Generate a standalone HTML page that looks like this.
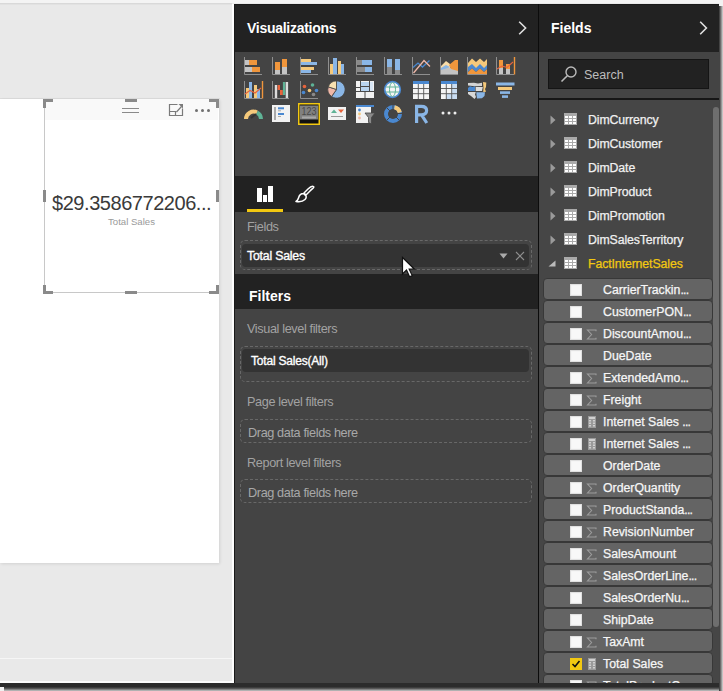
<!DOCTYPE html>
<html><head><meta charset="utf-8">
<style>
*{margin:0;padding:0;box-sizing:border-box}
html,body{width:723px;height:691px;overflow:hidden;background:#e9e9e9;font-family:"Liberation Sans",sans-serif}
.a{position:absolute}
.t{position:absolute;white-space:nowrap;line-height:1}
</style></head><body>
<!-- top strip -->
<div class="a" style="left:0;top:0;width:723px;height:3px;background:#f4f4f4"></div>
<div class="a" style="left:0;top:3px;width:232px;height:1px;background:#d9d9d9"></div>
<div class="a" style="left:0;top:4px;width:232px;height:1px;background:#e2e2e2"></div>
<!-- white report canvas -->
<div class="a" style="left:0;top:98px;width:220px;height:1px;background:#dcdcdc"></div>
<div class="a" style="left:0;top:99px;width:219px;height:464px;background:#fff;box-shadow:1px 1px 3px rgba(0,0,0,0.1)"></div>
<!-- card visual -->
<div class="a" style="left:44px;top:99px;width:175px;height:194px;border-left:1px solid #c8c8c8;border-bottom:1px solid #c8c8c8"></div>
<div class="a" style="left:45px;top:99px;width:173px;height:21px;background:#f9f9f9"></div>
<!-- handles -->
<div class="a" style="left:43px;top:99px;width:10px;height:3px;background:#8a8a8a"></div>
<div class="a" style="left:43px;top:99px;width:3px;height:9px;background:#8a8a8a"></div>
<div class="a" style="left:209px;top:99px;width:10px;height:3px;background:#8a8a8a"></div>
<div class="a" style="left:216px;top:99px;width:3px;height:9px;background:#8a8a8a"></div>
<div class="a" style="left:125px;top:99px;width:12px;height:3px;background:#8a8a8a"></div>
<div class="a" style="left:43px;top:190px;width:3px;height:12px;background:#8a8a8a"></div>
<div class="a" style="left:216px;top:190px;width:3px;height:12px;background:#8a8a8a"></div>
<div class="a" style="left:43px;top:285px;width:3px;height:9px;background:#8a8a8a"></div>
<div class="a" style="left:43px;top:291px;width:10px;height:3px;background:#8a8a8a"></div>
<div class="a" style="left:216px;top:285px;width:3px;height:9px;background:#8a8a8a"></div>
<div class="a" style="left:209px;top:291px;width:10px;height:3px;background:#8a8a8a"></div>
<div class="a" style="left:125px;top:291px;width:12px;height:3px;background:#8a8a8a"></div>
<!-- header icons -->
<div class="a" style="left:122px;top:108px;width:17px;height:1px;background:#8a8a8a"></div>
<div class="a" style="left:122px;top:112px;width:17px;height:1px;background:#8a8a8a"></div>
<svg class="a" style="left:168px;top:103px" width="16" height="14" viewBox="0 0 16 14"><path d="M9.5 1.5 H1.5 V12.5 H14.5 V5.5 M1.5 8.5 H7.5 V12.5 M8.5 9 L13.5 3.5" fill="none" stroke="#7a7a7a" stroke-width="1.2"/><path d="M10.5 1 H15 V5.5Z" fill="#7a7a7a"/></svg>
<div class="a" style="left:195px;top:109px;width:3px;height:3px;background:#707070;border-radius:50%"></div>
<div class="a" style="left:201px;top:109px;width:3px;height:3px;background:#707070;border-radius:50%"></div>
<div class="a" style="left:207px;top:109px;width:3px;height:3px;background:#707070;border-radius:50%"></div>
<div class="t" style="left:52px;top:193px;font-size:20px;color:#3a3a3a;letter-spacing:-0.45px">$29.3586772206...</div>
<div class="t" style="left:108px;top:217px;font-size:9.6px;color:#9a9a9a">Total Sales</div>

<!-- light lines near bottom -->
<div class="a" style="left:0;top:658px;width:232px;height:1px;background:#f6f6f6"></div>
<div class="a" style="left:0;top:681px;width:234px;height:2px;background:#fdfdfd"></div>
<div class="a" style="left:232px;top:4px;width:2px;height:679px;background:#fdfdfd"></div>

<!-- dark app frame -->
<div class="a" style="left:234px;top:4px;width:485px;height:683px;background:#1a1a1a"></div>
<div class="a" style="left:0;top:683px;width:719px;height:4px;background:#2c2c2c"></div>
<div class="a" style="left:0;top:687px;width:723px;height:4px;background:#f2f2f2"></div>
<div class="a" style="left:719px;top:0;width:4px;height:691px;background:#f2f2f2"></div>
<div class="a" style="left:4px;top:687px;width:719px;height:4px;background:linear-gradient(#303030,#5a5a5a 40%,#c8c8c8)"></div>
<div class="a" style="left:719px;top:6px;width:4px;height:685px;background:linear-gradient(90deg,#303030,#707070 40%,#d8d8d8)"></div>

<!-- VIZ PANE -->
<div class="a" style="left:235px;top:5px;width:303px;height:47px;background:#222"></div>
<div class="t" style="left:247px;top:21px;font-size:14px;font-weight:bold;color:#fff;letter-spacing:-0.28px">Visualizations</div>
<svg class="a" style="left:518px;top:21px" width="10" height="14" viewBox="0 0 10 14"><path d="M1.2 0.8 L7.6 7 L1.2 13.2" fill="none" stroke="#e0e0e0" stroke-width="1.6"/></svg>
<div class="a" style="left:235px;top:52px;width:303px;height:124px;background:#444"></div>
<svg class="a" style="left:0;top:0" width="723" height="176" viewBox="0 0 723 176"><path d="M244.5 57 V74.5 H262" fill="none" stroke="#8f8f8f" stroke-width="1"/><rect x="245" y="60" width="4" height="5" fill="#c4c4c4"/><rect x="249" y="60" width="8" height="5" fill="#f0963c"/><rect x="245" y="67" width="7" height="5" fill="#c4c4c4"/><rect x="252" y="67" width="8" height="5" fill="#f0963c"/><path d="M272.5 57 V74.5 H290" fill="none" stroke="#8f8f8f" stroke-width="1"/><rect x="275" y="62" width="5" height="8" fill="#f0963c"/><rect x="275" y="70" width="5" height="4" fill="#c4c4c4"/><rect x="282" y="59" width="5" height="8" fill="#f0963c"/><rect x="282" y="67" width="5" height="7" fill="#c4c4c4"/><path d="M300.5 57 V74.5 H318" fill="none" stroke="#8f8f8f" stroke-width="1"/><rect x="301" y="59" width="10" height="3" fill="#f5c97b"/><rect x="301" y="62" width="16" height="3" fill="#8ab6e6"/><rect x="301" y="67" width="13" height="3" fill="#f5c97b"/><rect x="301" y="70" width="10" height="3" fill="#8ab6e6"/><path d="M328.5 57 V74.5 H346" fill="none" stroke="#8f8f8f" stroke-width="1"/><rect x="330" y="64" width="3" height="10" fill="#f5c97b"/><rect x="333" y="58" width="4" height="16" fill="#8ab6e6"/><rect x="338" y="61" width="3" height="13" fill="#f5c97b"/><rect x="341" y="64" width="3" height="10" fill="#8ab6e6"/><path d="M356.5 57 V74.5 H374" fill="none" stroke="#8f8f8f" stroke-width="1"/><rect x="357" y="60" width="5" height="5" fill="#8a8a8a"/><rect x="362" y="60" width="10" height="5" fill="#8ab6e6"/><rect x="357" y="67" width="8" height="5" fill="#8a8a8a"/><rect x="365" y="67" width="7" height="5" fill="#8ab6e6"/><path d="M384.5 57 V74.5 H402" fill="none" stroke="#8f8f8f" stroke-width="1"/><rect x="387" y="59" width="5" height="8" fill="#8ab6e6"/><rect x="387" y="67" width="5" height="7" fill="#8a8a8a"/><rect x="395" y="59" width="5" height="11" fill="#8ab6e6"/><rect x="395" y="70" width="5" height="4" fill="#8a8a8a"/><path d="M412.5 57 V74.5 H430" fill="none" stroke="#8f8f8f" stroke-width="1"/><path d="M413 67.5 L418 63 L422.5 67 L429.5 60.5" fill="none" stroke="#4a88d0" stroke-width="1.3"/><path d="M413.5 73 L424 60.5 L430 66.5" fill="none" stroke="#f0b8a8" stroke-width="1.3"/><path d="M440.5 57 V74.5 H458" fill="none" stroke="#8f8f8f" stroke-width="1"/><path d="M441 74 V67 L446 64 L451 68 L458 66 V74Z" fill="#c4c4c4"/><path d="M441 66 L446 61 L450 64 L450 68 L446 66 L441 69Z" fill="#f8dca8"/><path d="M441 68 L446 65 L450 67 L446 68.5 L441 70Z" fill="#8ab6e6"/><path d="M449 65 L455 60 L458 60 V71 L451 69Z" fill="#f0963c"/><path d="M467.5 57 V74.5 H487" fill="none" stroke="#8f8f8f" stroke-width="1"/><path d="M468 63 L472 58.5 L476 62 L480 58.5 L484 62 L487 59 V67 L484 70 L480 66 L476 70 L472 66 L468 69Z" fill="#f5c97b"/><path d="M468 67 L472 64 L476 68 L480 64 L484 68 L487 65 V69 L484 72 L480 68.5 L476 72 L472 68.5 L468 72Z" fill="#4a88d0"/><path d="M468 72 L472 68.5 L476 72 L480 68.5 L484 72 L487 69 V74 H468Z" fill="#f0963c"/><path d="M496.5 57 V74.5 H514" fill="none" stroke="#8f8f8f" stroke-width="1"/><path d="M514.5 57 V74.5" stroke="#f0963c" stroke-width="1.4"/><rect x="499" y="60" width="4" height="8" fill="#f0963c"/><rect x="499" y="68" width="4" height="6" fill="#c4c4c4"/><rect x="506" y="64" width="4" height="5" fill="#f0963c"/><rect x="506" y="69" width="4" height="5" fill="#c4c4c4"/><path d="M497 69 L502 66 L507 67.5 L513 62" fill="none" stroke="#e8643c" stroke-width="1.1"/><path d="M244.5 81 V98.5 H262" fill="none" stroke="#8f8f8f" stroke-width="1"/><path d="M262.5 81 V98.5" stroke="#f0963c" stroke-width="1.4"/><rect x="246" y="88" width="3" height="10" fill="#f5c97b"/><rect x="249" y="82" width="3" height="16" fill="#8ab6e6"/><rect x="254" y="85" width="3" height="13" fill="#f5c97b"/><rect x="257" y="89" width="3" height="9" fill="#8ab6e6"/><path d="M245 94 L250 90.5 L255 93 L261 88" fill="none" stroke="#e8643c" stroke-width="1.1"/><path d="M272.5 81 V98.5 H289" fill="none" stroke="#8f8f8f" stroke-width="1"/><rect x="274.8" y="85" width="2.4" height="13" fill="#dcdcdc"/><rect x="277.6" y="85" width="2.4" height="5" fill="#e8643c"/><rect x="280" y="90" width="2.8" height="5" fill="#e8643c"/><rect x="282.9" y="82" width="2.4" height="13" fill="#5fb396"/><rect x="285.7" y="82" width="2.4" height="16" fill="#dcdcdc"/><path d="M300.5 81 V98.5 H318" fill="none" stroke="#8f8f8f" stroke-width="1"/><circle cx="304.5" cy="86.5" r="1.8" fill="#e8643c"/><circle cx="312.5" cy="85" r="1.8" fill="#5fb396"/><circle cx="303.5" cy="92.5" r="1.8" fill="#4a88d0"/><circle cx="309.5" cy="90.5" r="1.8" fill="#f5c97b"/><circle cx="316.5" cy="90.5" r="1.8" fill="#4a88d0"/><circle cx="313.5" cy="94.5" r="1.8" fill="#8a8a8a"/><path d="M336.5 89.5 L336.50 80.90 A8.6 8.6 0 1 1 331.57 96.54Z" fill="#8ab6e6" stroke="#444" stroke-width="0.8"/><path d="M336.5 89.5 L331.57 96.54 A8.6 8.6 0 0 1 328.32 86.84Z" fill="#f0b8a8" stroke="#444" stroke-width="0.8"/><path d="M336.5 89.5 L328.32 86.84 A8.6 8.6 0 0 1 336.50 80.90Z" fill="#f8e0b0" stroke="#444" stroke-width="0.8"/><rect x="356" y="81" width="18" height="17" fill="#f2f2f2"/><path d="M356 91.5 H374 M365 91.5 V98 M360.5 81 V91 M356 87.5 H360.5 M369.5 81 V91 M360.5 86.5 H369.5" stroke="#4a4a4a" stroke-width="1"/><rect x="361" y="82" width="8" height="4" fill="#b8d4f0"/><rect x="361" y="87" width="8" height="4" fill="#b8d4f0"/><rect x="370" y="82" width="3" height="9" fill="#d8e6f5"/><circle cx="392.5" cy="89.5" r="7.8" fill="#f4f4f4" stroke="#4a88d0" stroke-width="1.7"/><path d="M386 87 H399 M386 92 H399" stroke="#5fb396" stroke-width="1" fill="none"/><ellipse cx="392.5" cy="89.5" rx="3" ry="7" fill="none" stroke="#5fb396" stroke-width="1"/><rect x="413" y="81" width="16" height="18" fill="#f4f4f4"/><rect x="413" y="81" width="16" height="3" fill="#4a88d0"/><path d="M418.3 84 V99 M423.7 84 V99 M413 88.5 H429 M413 93.7 H429" stroke="#555" stroke-width="0.9"/><rect x="441" y="81" width="16" height="18" fill="#f4f4f4"/><rect x="441" y="81" width="16" height="3" fill="#4a88d0"/><rect x="446.3" y="93.7" width="10.7" height="5.3" fill="#c8dcf2"/><rect x="451.7" y="84" width="5.3" height="15" fill="#c8dcf2"/><path d="M446.3 84 V99 M451.7 84 V99 M441 88.5 H457 M441 93.7 H457" stroke="#555" stroke-width="0.9"/><path d="M468 83 L474 82.8 L478 83.5 L482 82.8 V86 L475 86.2 L468 85.5Z" fill="#d4d4d4"/><path d="M483 82 L486.3 82.5 L486 87 L485 89 L486 91.8 L483.2 92 L483.5 88Z" fill="#f5c97b"/><path d="M468 88 L470 86.3 L472.5 87 L475 86.3 V91 H468Z" fill="#4a88d0"/><path d="M475.6 87 H482.8 L482 91 H475.6Z" fill="#dedede"/><path d="M468 92 H475.8 L475 94.5 L476 97 L474.5 99 L471 96 L468 94Z" fill="#d8d8d8"/><path d="M476.3 92.2 H485 L484.5 96 L482 98.2 L477 98.5 L476.5 95Z" fill="#8ab6e6"/><rect x="496" y="82.5" width="18.5" height="3" fill="#8ab6e6"/><rect x="498" y="87" width="14" height="3" fill="#f5c97b"/><rect x="500" y="91.3" width="10" height="2.6" fill="#8ab6e6"/><rect x="502" y="95.3" width="6" height="2.6" fill="#8ab6e6"/><path d="M246 119 A7.5 7.5 0 0 1 257 112.5" fill="none" stroke="#f5c97b" stroke-width="4"/><path d="M257 112.5 A7.5 7.5 0 0 1 261 119" fill="none" stroke="#5fb396" stroke-width="4"/><path d="M251 118 L256 114" stroke="#333" stroke-width="2"/><rect x="272" y="105" width="18" height="17" fill="#f2f2f2"/><rect x="274" y="107" width="2" height="13" fill="#aaa"/><rect x="278" y="107.3" width="6" height="2" fill="#4a88d0"/><rect x="278" y="110.3" width="3" height="1" fill="#aaa"/><rect x="278" y="113" width="6" height="2" fill="#4a88d0"/><rect x="278" y="116" width="3" height="1" fill="#aaa"/><rect x="298.75" y="103.75" width="20.5" height="20.5" fill="#111" stroke="#f2c811" stroke-width="1.5"/><rect x="300" y="105.5" width="18" height="14" fill="#808080"/><rect x="302" y="116.5" width="14" height="2" fill="#a8a8a8"/><text x="309" y="115" font-family="Liberation Sans" font-size="10.5" fill="#4a4a4a" text-anchor="middle" textLength="15" lengthAdjust="spacingAndGlyphs">123</text><rect x="328" y="107" width="18" height="13" fill="#f2f2f2"/><path d="M331 113 L334 109.5 L337 113Z" fill="#5fb396"/><path d="M338 109.5 L344 109.5 L341 113Z" fill="#e8643c"/><rect x="331" y="116" width="12" height="1" fill="#999"/><rect x="356" y="105" width="15" height="18" fill="#f2f2f2"/><rect x="356" y="105" width="18" height="2" fill="#4a88d0"/><circle cx="359.5" cy="110" r="1.4" fill="#4a88d0"/><circle cx="359.5" cy="114" r="1.4" fill="#f5c97b"/><circle cx="359.5" cy="118" r="1.4" fill="#f0b8a8"/><path d="M365 113 H375 L371.5 117.5 V124 L368.5 122.5 V117.5Z" fill="#8a8a8a" stroke="#444" stroke-width="0.8"/><circle cx="393" cy="114" r="7" fill="none" stroke="#4a88d0" stroke-width="4"/><path d="M394.5 107.2 A7 7 0 0 1 399.8 112.5" fill="none" stroke="#f5c97b" stroke-width="4"/><path d="M393 104 V110 M403 113.5 H397 M387 120 L390 117 M387 108 L390 111 M399 120 L396 117" stroke="#444" stroke-width="1"/><path d="M416.6 123 V106.3 H421.3 C425.3 106.3 426.6 108.3 426.6 110.6 C426.6 113 425 114.8 421.3 114.8 H416.6 M421.5 114.8 L426.8 123" fill="none" stroke="#8ab6e6" stroke-width="3.2"/><circle cx="443" cy="113" r="1.5" fill="#eee"/><circle cx="449" cy="113" r="1.5" fill="#eee"/><circle cx="455" cy="113" r="1.5" fill="#eee"/></svg>
<div class="a" style="left:235px;top:176px;width:303px;height:36px;background:#222"></div>
<svg class="a" style="left:257px;top:185px" width="16" height="18" viewBox="0 0 16 18"><path d="M0 3h5v14h-5z M6 10h4v7h-4z M11 1h5v16h-5z" fill="#fff"/></svg>
<svg class="a" style="left:295px;top:185px" width="20" height="18" viewBox="0 0 20 18"><path d="M18.5 1.5 C17 0.5 15.5 1.5 13 4 L9 8 L11 10 L15 6 C17.5 3.5 19.5 2.5 18.5 1.5Z M8.5 8.5 C5 8.5 4 11 3.5 13 C3 15 2 16 1 16.5 C4 17 8 16.5 10 14.5 C11.5 13 11.5 11 10.5 10.5Z" fill="none" stroke="#fff" stroke-width="1.5" stroke-linejoin="round"/></svg>
<div class="a" style="left:247px;top:209px;width:36px;height:3px;background:#f2c811"></div>
<div class="a" style="left:235px;top:212px;width:303px;height:62px;background:#444"></div>
<div class="t" style="left:247px;top:221px;font-size:12.7px;letter-spacing:-0.38px;color:#a2a2a2">Fields</div>
<div class="a" style="left:240px;top:240px;width:292px;height:30px;border:1px dashed #686868;border-radius:5px"></div>
<div class="a" style="left:242px;top:244px;width:287px;height:23px;background:#333;border-radius:4px"></div>
<div class="t" style="left:247px;top:250px;font-size:12.3px;color:#fff;-webkit-text-stroke:0.35px #fff;letter-spacing:-0.2px">Total Sales</div>
<svg class="a" style="left:499px;top:253px" width="9" height="6" viewBox="0 0 9 6"><path d="M0.5 0.5h8l-4 5z" fill="#aaa"/></svg>
<svg class="a" style="left:515px;top:251px" width="10" height="10" viewBox="0 0 10 10"><path d="M1 1L9 9M9 1L1 9" stroke="#8e8e8e" stroke-width="1.1"/></svg>
<div class="a" style="left:235px;top:274px;width:303px;height:35px;background:#222"></div>
<div class="t" style="left:249px;top:289px;font-size:14px;font-weight:bold;color:#fff">Filters</div>
<div class="a" style="left:235px;top:309px;width:303px;height:374px;background:#444"></div>
<div class="t" style="left:247px;top:323px;font-size:12.7px;letter-spacing:-0.38px;color:#a2a2a2">Visual level filters</div>
<div class="a" style="left:240px;top:346px;width:292px;height:36px;border:1px dashed #686868;border-radius:5px"></div>
<div class="a" style="left:242px;top:349px;width:287px;height:23px;background:#333;border-radius:4px"></div>
<div class="t" style="left:251px;top:355px;font-size:12px;color:#fff;-webkit-text-stroke:0.35px #fff;letter-spacing:-0.2px">Total Sales(All)</div>
<div class="t" style="left:247px;top:396px;font-size:12.7px;letter-spacing:-0.38px;color:#a2a2a2">Page level filters</div>
<div class="a" style="left:240px;top:419px;width:292px;height:24px;border:1px dashed #686868;border-radius:5px"></div>
<div class="t" style="left:248px;top:427px;font-size:12.7px;letter-spacing:-0.38px;color:#a8a8a8">Drag data fields here</div>
<div class="t" style="left:247px;top:457px;font-size:12.7px;letter-spacing:-0.38px;color:#a2a2a2">Report level filters</div>
<div class="a" style="left:240px;top:479px;width:292px;height:24px;border:1px dashed #686868;border-radius:5px"></div>
<div class="t" style="left:248px;top:487px;font-size:12.7px;letter-spacing:-0.38px;color:#a8a8a8">Drag data fields here</div>
<!-- cursor -->
<svg class="a" style="left:401px;top:256px" width="16" height="23" viewBox="0 0 16 23"><path d="M1.5 1.5 L1.5 18 L5.5 14 L8.6 20.8 L11.2 19.6 L8.2 13.2 L13.5 13.2 Z" fill="#fff" stroke="#111" stroke-width="1.2" stroke-linejoin="miter"/></svg>

<!-- divider -->
<div class="a" style="left:538px;top:4px;width:1px;height:679px;background:#0c0c0c"></div>

<!-- FIELDS PANE -->
<div class="a" style="left:539px;top:5px;width:180px;height:47px;background:#222"></div>
<div class="t" style="left:551px;top:21px;font-size:14px;font-weight:bold;color:#fff">Fields</div>
<svg class="a" style="left:699px;top:21px" width="10" height="14" viewBox="0 0 10 14"><path d="M1.2 0.8 L7.4 7 L1.2 13.2" fill="none" stroke="#e0e0e0" stroke-width="1.6"/></svg>
<div class="a" style="left:539px;top:52px;width:180px;height:47px;background:#444"></div>
<div class="a" style="left:548px;top:59px;width:161px;height:30px;background:#222;border:1px solid #151515"></div>
<svg class="a" style="left:560px;top:65px" width="18" height="18" viewBox="0 0 18 18"><circle cx="11" cy="7" r="5" fill="none" stroke="#bbb" stroke-width="1.4"/><path d="M7.3 10.7 L1.5 16.5" stroke="#bbb" stroke-width="1.6"/></svg>
<div class="t" style="left:584px;top:69px;font-size:12.5px;color:#bdbdbd">Search</div>
<div class="a" style="left:539px;top:98px;width:180px;height:2px;background:#161616"></div>
<div class="a" style="left:539px;top:100px;width:180px;height:583px;background:#464646"></div>
<div class="a" style="left:713px;top:107px;width:6px;height:520px;background:#6e6e6e;border-radius:3px"></div>
<svg class="a" style="left:550px;top:115px" width="6" height="10" viewBox="0 0 6 10"><path d="M0.5 0.5 L5.5 5 L0.5 9.5Z" fill="#9a9a9a"/></svg>
<svg class="a" style="left:564px;top:113px" width="13" height="12" viewBox="0 0 13 12"><rect x="0" y="0" width="13" height="12" fill="#aaa"/><g fill="#fff"><rect x="1" y="3" width="3" height="2"/><rect x="5" y="3" width="3" height="2"/><rect x="9" y="3" width="3" height="2"/><rect x="1" y="6" width="3" height="2"/><rect x="5" y="6" width="3" height="2"/><rect x="9" y="6" width="3" height="2"/><rect x="1" y="9" width="3" height="2"/><rect x="5" y="9" width="3" height="2"/><rect x="9" y="9" width="3" height="2"/></g></svg>
<div class="t" style="left:588px;top:114px;font-size:12.3px;color:#f0f0f0;letter-spacing:-0.1px;-webkit-text-stroke:0.25px #f0f0f0">DimCurrency</div>
<svg class="a" style="left:550px;top:139px" width="6" height="10" viewBox="0 0 6 10"><path d="M0.5 0.5 L5.5 5 L0.5 9.5Z" fill="#9a9a9a"/></svg>
<svg class="a" style="left:564px;top:137px" width="13" height="12" viewBox="0 0 13 12"><rect x="0" y="0" width="13" height="12" fill="#aaa"/><g fill="#fff"><rect x="1" y="3" width="3" height="2"/><rect x="5" y="3" width="3" height="2"/><rect x="9" y="3" width="3" height="2"/><rect x="1" y="6" width="3" height="2"/><rect x="5" y="6" width="3" height="2"/><rect x="9" y="6" width="3" height="2"/><rect x="1" y="9" width="3" height="2"/><rect x="5" y="9" width="3" height="2"/><rect x="9" y="9" width="3" height="2"/></g></svg>
<div class="t" style="left:588px;top:138px;font-size:12.3px;color:#f0f0f0;letter-spacing:-0.1px;-webkit-text-stroke:0.25px #f0f0f0">DimCustomer</div>
<svg class="a" style="left:550px;top:163px" width="6" height="10" viewBox="0 0 6 10"><path d="M0.5 0.5 L5.5 5 L0.5 9.5Z" fill="#9a9a9a"/></svg>
<svg class="a" style="left:564px;top:161px" width="13" height="12" viewBox="0 0 13 12"><rect x="0" y="0" width="13" height="12" fill="#aaa"/><g fill="#fff"><rect x="1" y="3" width="3" height="2"/><rect x="5" y="3" width="3" height="2"/><rect x="9" y="3" width="3" height="2"/><rect x="1" y="6" width="3" height="2"/><rect x="5" y="6" width="3" height="2"/><rect x="9" y="6" width="3" height="2"/><rect x="1" y="9" width="3" height="2"/><rect x="5" y="9" width="3" height="2"/><rect x="9" y="9" width="3" height="2"/></g></svg>
<div class="t" style="left:588px;top:162px;font-size:12.3px;color:#f0f0f0;letter-spacing:-0.1px;-webkit-text-stroke:0.25px #f0f0f0">DimDate</div>
<svg class="a" style="left:550px;top:187px" width="6" height="10" viewBox="0 0 6 10"><path d="M0.5 0.5 L5.5 5 L0.5 9.5Z" fill="#9a9a9a"/></svg>
<svg class="a" style="left:564px;top:185px" width="13" height="12" viewBox="0 0 13 12"><rect x="0" y="0" width="13" height="12" fill="#aaa"/><g fill="#fff"><rect x="1" y="3" width="3" height="2"/><rect x="5" y="3" width="3" height="2"/><rect x="9" y="3" width="3" height="2"/><rect x="1" y="6" width="3" height="2"/><rect x="5" y="6" width="3" height="2"/><rect x="9" y="6" width="3" height="2"/><rect x="1" y="9" width="3" height="2"/><rect x="5" y="9" width="3" height="2"/><rect x="9" y="9" width="3" height="2"/></g></svg>
<div class="t" style="left:588px;top:186px;font-size:12.3px;color:#f0f0f0;letter-spacing:-0.1px;-webkit-text-stroke:0.25px #f0f0f0">DimProduct</div>
<svg class="a" style="left:550px;top:211px" width="6" height="10" viewBox="0 0 6 10"><path d="M0.5 0.5 L5.5 5 L0.5 9.5Z" fill="#9a9a9a"/></svg>
<svg class="a" style="left:564px;top:209px" width="13" height="12" viewBox="0 0 13 12"><rect x="0" y="0" width="13" height="12" fill="#aaa"/><g fill="#fff"><rect x="1" y="3" width="3" height="2"/><rect x="5" y="3" width="3" height="2"/><rect x="9" y="3" width="3" height="2"/><rect x="1" y="6" width="3" height="2"/><rect x="5" y="6" width="3" height="2"/><rect x="9" y="6" width="3" height="2"/><rect x="1" y="9" width="3" height="2"/><rect x="5" y="9" width="3" height="2"/><rect x="9" y="9" width="3" height="2"/></g></svg>
<div class="t" style="left:588px;top:210px;font-size:12.3px;color:#f0f0f0;letter-spacing:-0.1px;-webkit-text-stroke:0.25px #f0f0f0">DimPromotion</div>
<svg class="a" style="left:550px;top:235px" width="6" height="10" viewBox="0 0 6 10"><path d="M0.5 0.5 L5.5 5 L0.5 9.5Z" fill="#9a9a9a"/></svg>
<svg class="a" style="left:564px;top:233px" width="13" height="12" viewBox="0 0 13 12"><rect x="0" y="0" width="13" height="12" fill="#aaa"/><g fill="#fff"><rect x="1" y="3" width="3" height="2"/><rect x="5" y="3" width="3" height="2"/><rect x="9" y="3" width="3" height="2"/><rect x="1" y="6" width="3" height="2"/><rect x="5" y="6" width="3" height="2"/><rect x="9" y="6" width="3" height="2"/><rect x="1" y="9" width="3" height="2"/><rect x="5" y="9" width="3" height="2"/><rect x="9" y="9" width="3" height="2"/></g></svg>
<div class="t" style="left:588px;top:234px;font-size:12.3px;color:#f0f0f0;letter-spacing:-0.1px;-webkit-text-stroke:0.25px #f0f0f0">DimSalesTerritory</div>
<svg class="a" style="left:548px;top:260px" width="8" height="7" viewBox="0 0 8 7"><path d="M7.5 0.5 L7.5 6.5 L0.5 6.5Z" fill="#bbb"/></svg>
<svg class="a" style="left:564px;top:257px" width="13" height="12" viewBox="0 0 13 12"><rect x="0" y="0" width="13" height="12" fill="#aaa"/><g fill="#fff"><rect x="1" y="3" width="3" height="2"/><rect x="5" y="3" width="3" height="2"/><rect x="9" y="3" width="3" height="2"/><rect x="1" y="6" width="3" height="2"/><rect x="5" y="6" width="3" height="2"/><rect x="9" y="6" width="3" height="2"/><rect x="1" y="9" width="3" height="2"/><rect x="5" y="9" width="3" height="2"/><rect x="9" y="9" width="3" height="2"/></g></svg>
<div class="t" style="left:588px;top:258px;font-size:12.3px;color:#f2c811;letter-spacing:-0.1px;-webkit-text-stroke:0.25px #f2c811">FactInternetSales</div>
<div class="a" style="left:539px;top:100px;width:180px;height:583px;overflow:hidden"><div class="a" style="left:-539px;top:-100px;width:723px;height:691px">
<div class="a" style="left:543px;top:278px;width:170px;height:22px;background:#646464;border:1px solid #383838;border-radius:4px"></div>
<div class="a" style="left:570px;top:284px;width:12px;height:12px;background:#f8f8f8;box-shadow:inset 0 0 1px 1px #ddd"></div>
<div class="t" style="left:603px;top:284px;font-size:12.3px;color:#f6f6f6;-webkit-text-stroke:0.25px #f6f6f6">CarrierTrackin<span style="letter-spacing:-0.8px">...</span></div>
<div class="a" style="left:543px;top:300px;width:170px;height:22px;background:#646464;border:1px solid #383838;border-radius:4px"></div>
<div class="a" style="left:570px;top:306px;width:12px;height:12px;background:#f8f8f8;box-shadow:inset 0 0 1px 1px #ddd"></div>
<div class="t" style="left:603px;top:306px;font-size:12.3px;color:#f6f6f6;-webkit-text-stroke:0.25px #f6f6f6">CustomerPON<span style="letter-spacing:-0.8px">...</span></div>
<div class="a" style="left:543px;top:322px;width:170px;height:22px;background:#646464;border:1px solid #383838;border-radius:4px"></div>
<div class="a" style="left:570px;top:328px;width:12px;height:12px;background:#f8f8f8;box-shadow:inset 0 0 1px 1px #ddd"></div>
<svg class="a" style="left:586px;top:329px" width="11" height="11" viewBox="0 0 11 11"><path d="M10 2.2 V1 H1.5 L5.6 5.5 L1.5 10 H10 V8.8" fill="none" stroke="#9c9c9c" stroke-width="1.1"/></svg>
<div class="t" style="left:603px;top:328px;font-size:12.3px;color:#f6f6f6;-webkit-text-stroke:0.25px #f6f6f6">DiscountAmou<span style="letter-spacing:-0.8px">...</span></div>
<div class="a" style="left:543px;top:344px;width:170px;height:22px;background:#646464;border:1px solid #383838;border-radius:4px"></div>
<div class="a" style="left:570px;top:350px;width:12px;height:12px;background:#f8f8f8;box-shadow:inset 0 0 1px 1px #ddd"></div>
<div class="t" style="left:603px;top:350px;font-size:12.3px;color:#f6f6f6;-webkit-text-stroke:0.25px #f6f6f6">DueDate</div>
<div class="a" style="left:543px;top:366px;width:170px;height:22px;background:#646464;border:1px solid #383838;border-radius:4px"></div>
<div class="a" style="left:570px;top:372px;width:12px;height:12px;background:#f8f8f8;box-shadow:inset 0 0 1px 1px #ddd"></div>
<svg class="a" style="left:586px;top:373px" width="11" height="11" viewBox="0 0 11 11"><path d="M10 2.2 V1 H1.5 L5.6 5.5 L1.5 10 H10 V8.8" fill="none" stroke="#9c9c9c" stroke-width="1.1"/></svg>
<div class="t" style="left:603px;top:372px;font-size:12.3px;color:#f6f6f6;-webkit-text-stroke:0.25px #f6f6f6">ExtendedAmo<span style="letter-spacing:-0.8px">...</span></div>
<div class="a" style="left:543px;top:388px;width:170px;height:22px;background:#646464;border:1px solid #383838;border-radius:4px"></div>
<div class="a" style="left:570px;top:394px;width:12px;height:12px;background:#f8f8f8;box-shadow:inset 0 0 1px 1px #ddd"></div>
<svg class="a" style="left:586px;top:395px" width="11" height="11" viewBox="0 0 11 11"><path d="M10 2.2 V1 H1.5 L5.6 5.5 L1.5 10 H10 V8.8" fill="none" stroke="#9c9c9c" stroke-width="1.1"/></svg>
<div class="t" style="left:603px;top:394px;font-size:12.3px;color:#f6f6f6;-webkit-text-stroke:0.25px #f6f6f6">Freight</div>
<div class="a" style="left:543px;top:410px;width:170px;height:22px;background:#646464;border:1px solid #383838;border-radius:4px"></div>
<div class="a" style="left:570px;top:416px;width:12px;height:12px;background:#f8f8f8;box-shadow:inset 0 0 1px 1px #ddd"></div>
<svg class="a" style="left:588px;top:416px" width="8" height="12" viewBox="0 0 8 12"><rect width="8" height="12" fill="#9a9a9a"/><g fill="#d0d0d0"><rect x="1" y="1" width="6" height="2"/><rect x="1" y="4" width="2" height="1.5"/><rect x="5" y="4" width="2" height="1.5"/><rect x="1" y="6.5" width="2" height="1.5"/><rect x="5" y="6.5" width="2" height="1.5"/><rect x="1" y="9" width="2" height="1.5"/><rect x="5" y="9" width="2" height="1.5"/></g></svg>
<div class="t" style="left:603px;top:416px;font-size:12.3px;color:#f6f6f6;-webkit-text-stroke:0.25px #f6f6f6">Internet Sales <span style="letter-spacing:-0.8px">...</span></div>
<div class="a" style="left:543px;top:432px;width:170px;height:22px;background:#646464;border:1px solid #383838;border-radius:4px"></div>
<div class="a" style="left:570px;top:438px;width:12px;height:12px;background:#f8f8f8;box-shadow:inset 0 0 1px 1px #ddd"></div>
<svg class="a" style="left:588px;top:438px" width="8" height="12" viewBox="0 0 8 12"><rect width="8" height="12" fill="#9a9a9a"/><g fill="#d0d0d0"><rect x="1" y="1" width="6" height="2"/><rect x="1" y="4" width="2" height="1.5"/><rect x="5" y="4" width="2" height="1.5"/><rect x="1" y="6.5" width="2" height="1.5"/><rect x="5" y="6.5" width="2" height="1.5"/><rect x="1" y="9" width="2" height="1.5"/><rect x="5" y="9" width="2" height="1.5"/></g></svg>
<div class="t" style="left:603px;top:438px;font-size:12.3px;color:#f6f6f6;-webkit-text-stroke:0.25px #f6f6f6">Internet Sales <span style="letter-spacing:-0.8px">...</span></div>
<div class="a" style="left:543px;top:454px;width:170px;height:22px;background:#646464;border:1px solid #383838;border-radius:4px"></div>
<div class="a" style="left:570px;top:460px;width:12px;height:12px;background:#f8f8f8;box-shadow:inset 0 0 1px 1px #ddd"></div>
<div class="t" style="left:603px;top:460px;font-size:12.3px;color:#f6f6f6;-webkit-text-stroke:0.25px #f6f6f6">OrderDate</div>
<div class="a" style="left:543px;top:476px;width:170px;height:22px;background:#646464;border:1px solid #383838;border-radius:4px"></div>
<div class="a" style="left:570px;top:482px;width:12px;height:12px;background:#f8f8f8;box-shadow:inset 0 0 1px 1px #ddd"></div>
<svg class="a" style="left:586px;top:483px" width="11" height="11" viewBox="0 0 11 11"><path d="M10 2.2 V1 H1.5 L5.6 5.5 L1.5 10 H10 V8.8" fill="none" stroke="#9c9c9c" stroke-width="1.1"/></svg>
<div class="t" style="left:603px;top:482px;font-size:12.3px;color:#f6f6f6;-webkit-text-stroke:0.25px #f6f6f6">OrderQuantity</div>
<div class="a" style="left:543px;top:498px;width:170px;height:22px;background:#646464;border:1px solid #383838;border-radius:4px"></div>
<div class="a" style="left:570px;top:504px;width:12px;height:12px;background:#f8f8f8;box-shadow:inset 0 0 1px 1px #ddd"></div>
<svg class="a" style="left:586px;top:505px" width="11" height="11" viewBox="0 0 11 11"><path d="M10 2.2 V1 H1.5 L5.6 5.5 L1.5 10 H10 V8.8" fill="none" stroke="#9c9c9c" stroke-width="1.1"/></svg>
<div class="t" style="left:603px;top:504px;font-size:12.3px;color:#f6f6f6;-webkit-text-stroke:0.25px #f6f6f6">ProductStanda<span style="letter-spacing:-0.8px">...</span></div>
<div class="a" style="left:543px;top:520px;width:170px;height:22px;background:#646464;border:1px solid #383838;border-radius:4px"></div>
<div class="a" style="left:570px;top:526px;width:12px;height:12px;background:#f8f8f8;box-shadow:inset 0 0 1px 1px #ddd"></div>
<svg class="a" style="left:586px;top:527px" width="11" height="11" viewBox="0 0 11 11"><path d="M10 2.2 V1 H1.5 L5.6 5.5 L1.5 10 H10 V8.8" fill="none" stroke="#9c9c9c" stroke-width="1.1"/></svg>
<div class="t" style="left:603px;top:526px;font-size:12.3px;color:#f6f6f6;-webkit-text-stroke:0.25px #f6f6f6">RevisionNumber</div>
<div class="a" style="left:543px;top:542px;width:170px;height:22px;background:#646464;border:1px solid #383838;border-radius:4px"></div>
<div class="a" style="left:570px;top:548px;width:12px;height:12px;background:#f8f8f8;box-shadow:inset 0 0 1px 1px #ddd"></div>
<svg class="a" style="left:586px;top:549px" width="11" height="11" viewBox="0 0 11 11"><path d="M10 2.2 V1 H1.5 L5.6 5.5 L1.5 10 H10 V8.8" fill="none" stroke="#9c9c9c" stroke-width="1.1"/></svg>
<div class="t" style="left:603px;top:548px;font-size:12.3px;color:#f6f6f6;-webkit-text-stroke:0.25px #f6f6f6">SalesAmount</div>
<div class="a" style="left:543px;top:564px;width:170px;height:22px;background:#646464;border:1px solid #383838;border-radius:4px"></div>
<div class="a" style="left:570px;top:570px;width:12px;height:12px;background:#f8f8f8;box-shadow:inset 0 0 1px 1px #ddd"></div>
<svg class="a" style="left:586px;top:571px" width="11" height="11" viewBox="0 0 11 11"><path d="M10 2.2 V1 H1.5 L5.6 5.5 L1.5 10 H10 V8.8" fill="none" stroke="#9c9c9c" stroke-width="1.1"/></svg>
<div class="t" style="left:603px;top:570px;font-size:12.3px;color:#f6f6f6;-webkit-text-stroke:0.25px #f6f6f6">SalesOrderLine<span style="letter-spacing:-0.8px">...</span></div>
<div class="a" style="left:543px;top:586px;width:170px;height:22px;background:#646464;border:1px solid #383838;border-radius:4px"></div>
<div class="a" style="left:570px;top:592px;width:12px;height:12px;background:#f8f8f8;box-shadow:inset 0 0 1px 1px #ddd"></div>
<div class="t" style="left:603px;top:592px;font-size:12.3px;color:#f6f6f6;-webkit-text-stroke:0.25px #f6f6f6">SalesOrderNu<span style="letter-spacing:-0.8px">...</span></div>
<div class="a" style="left:543px;top:608px;width:170px;height:22px;background:#646464;border:1px solid #383838;border-radius:4px"></div>
<div class="a" style="left:570px;top:614px;width:12px;height:12px;background:#f8f8f8;box-shadow:inset 0 0 1px 1px #ddd"></div>
<div class="t" style="left:603px;top:614px;font-size:12.3px;color:#f6f6f6;-webkit-text-stroke:0.25px #f6f6f6">ShipDate</div>
<div class="a" style="left:543px;top:630px;width:170px;height:22px;background:#646464;border:1px solid #383838;border-radius:4px"></div>
<div class="a" style="left:570px;top:636px;width:12px;height:12px;background:#f8f8f8;box-shadow:inset 0 0 1px 1px #ddd"></div>
<svg class="a" style="left:586px;top:637px" width="11" height="11" viewBox="0 0 11 11"><path d="M10 2.2 V1 H1.5 L5.6 5.5 L1.5 10 H10 V8.8" fill="none" stroke="#9c9c9c" stroke-width="1.1"/></svg>
<div class="t" style="left:603px;top:636px;font-size:12.3px;color:#f6f6f6;-webkit-text-stroke:0.25px #f6f6f6">TaxAmt</div>
<div class="a" style="left:543px;top:652px;width:170px;height:22px;background:#646464;border:1px solid #383838;border-radius:4px"></div>
<div class="a" style="left:570px;top:658px;width:12px;height:12px;background:#f2c811"></div>
<svg class="a" style="left:570px;top:658px" width="12" height="12" viewBox="0 0 12 12"><path d="M2.5 6 L5 8.5 L9.5 3" fill="none" stroke="#111" stroke-width="1.6"/></svg>
<svg class="a" style="left:588px;top:658px" width="8" height="12" viewBox="0 0 8 12"><rect width="8" height="12" fill="#9a9a9a"/><g fill="#d0d0d0"><rect x="1" y="1" width="6" height="2"/><rect x="1" y="4" width="2" height="1.5"/><rect x="5" y="4" width="2" height="1.5"/><rect x="1" y="6.5" width="2" height="1.5"/><rect x="5" y="6.5" width="2" height="1.5"/><rect x="1" y="9" width="2" height="1.5"/><rect x="5" y="9" width="2" height="1.5"/></g></svg>
<div class="t" style="left:603px;top:658px;font-size:12.3px;color:#f6f6f6;-webkit-text-stroke:0.25px #f6f6f6">Total Sales</div>
<div class="a" style="left:543px;top:674px;width:170px;height:22px;background:#646464;border:1px solid #383838;border-radius:4px"></div>
<div class="a" style="left:570px;top:680px;width:12px;height:12px;background:#f8f8f8;box-shadow:inset 0 0 1px 1px #ddd"></div>
<svg class="a" style="left:586px;top:681px" width="11" height="11" viewBox="0 0 11 11"><path d="M10 2.2 V1 H1.5 L5.6 5.5 L1.5 10 H10 V8.8" fill="none" stroke="#9c9c9c" stroke-width="1.1"/></svg>
<div class="t" style="left:603px;top:680px;font-size:12.3px;color:#f6f6f6;-webkit-text-stroke:0.25px #f6f6f6">TotalProductC<span style="letter-spacing:-0.8px">...</span></div>
</div></div>
</body></html>
